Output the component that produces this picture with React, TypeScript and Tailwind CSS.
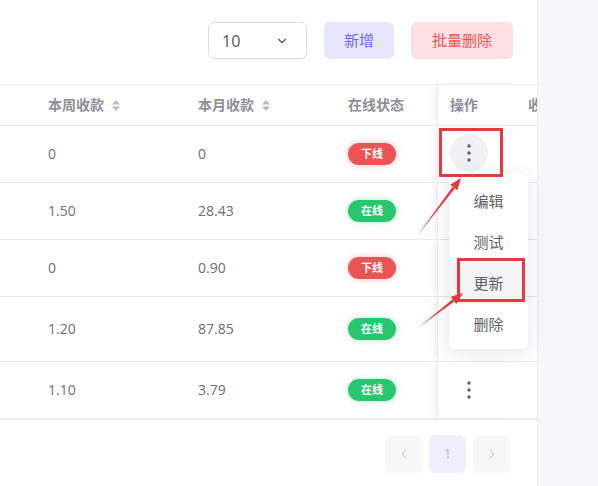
import { ChevronDown, ChevronLeft, ChevronRight } from 'lucide-react'

type Row = {
  week: string
  month: string
  online: boolean
  h: string
}

const rows: Row[] = [
  { week: '0', month: '0', online: false, h: 'h-[57px]' },
  { week: '1.50', month: '28.43', online: true, h: 'h-[57px]' },
  { week: '0', month: '0.90', online: false, h: 'h-[57px]' },
  { week: '1.20', month: '87.85', online: true, h: 'h-[65px]' },
  { week: '1.10', month: '3.79', online: true, h: 'h-[58px]' },
]

const font = { fontFamily: '"Open Sans", "Noto Sans CJK SC", sans-serif' }

function SortIcon() {
  return (
    <svg width="8" height="11" viewBox="0 0 8 11" className="ml-2">
      <path d="M4 0 L8 4.4 H0 Z" fill="#b9b9c3" />
      <path d="M4 11 L8 6.6 H0 Z" fill="#b9b9c3" />
    </svg>
  )
}

function Dots() {
  return (
    <svg width="4" height="18" viewBox="0 0 4 18">
      <circle cx="2" cy="2" r="1.7" fill="#5f5f66" />
      <circle cx="2" cy="9" r="1.7" fill="#5f5f66" />
      <circle cx="2" cy="16" r="1.7" fill="#5f5f66" />
    </svg>
  )
}

function Arrow({ x1, y1, x2, y2 }: { x1: number; y1: number; x2: number; y2: number }) {
  const dx = x2 - x1
  const dy = y2 - y1
  const len = Math.hypot(dx, dy)
  const ux = dx / len
  const uy = dy / len
  const bx = x2 - ux * 12
  const by = y2 - uy * 12
  const px = -uy
  const py = ux
  const head = `${x2},${y2} ${bx + px * 4.5},${by + py * 4.5} ${bx - px * 4.5},${by - py * 4.5}`
  const shaft = `${x1},${y1} ${bx + px * 1.4},${by + py * 1.4} ${bx - px * 1.4},${by - py * 1.4}`
  return (
    <g fill="#e8383d">
      <polygon points={shaft} />
      <polygon points={head} />
    </g>
  )
}

function Badge({ online }: { online: boolean }) {
  return online ? (
    <span className="flex h-[22px] w-[48px] items-center justify-center rounded-full bg-[#28c76f] text-[11px] font-bold text-white shadow-[0_0_6px_rgba(40,199,111,0.35)]">
      在线
    </span>
  ) : (
    <span className="flex h-[22px] w-[48px] items-center justify-center rounded-full bg-[#ea5455] text-[11px] font-bold text-white shadow-[0_0_6px_rgba(234,84,85,0.4)]">
      下线
    </span>
  )
}

export default function App() {
  return (
    <div className="relative flex h-[486px] w-[598px] overflow-hidden bg-[#f7f7fa]" style={font}>
      <div className="flex h-full w-[538px] shrink-0 flex-col overflow-hidden border-r border-[#ececf1] bg-white">
        {/* toolbar */}
        <div className="flex h-[84px] shrink-0 items-start justify-end gap-[17px] pr-[24px] pt-[22px]">
          <div className="flex h-[37px] w-[99px] items-center justify-between rounded-md border border-[#dcdce2] pl-[13px] pr-[17px] text-base text-[#555]">
            <span>10</span>
            <ChevronDown size={14} strokeWidth={2} className="text-[#555]" />
          </div>
          <button className="flex h-[37px] w-[70px] items-center justify-center rounded-md bg-[#e8e6fd] text-[15px] text-[#7367f0]">
            新增
          </button>
          <button className="flex h-[37px] w-[102px] items-center justify-center rounded-md bg-[#fde1e2] text-[15px] text-[#ea5455]">
            批量删除
          </button>
        </div>

        {/* table */}
        <div className="flex w-[600px] flex-col text-sm">
          <div className="flex h-[42px] items-center border-y border-[#ebe9f1] font-semibold text-[#8e8e96]">
            <div className="w-[36px] shrink-0" />
            <div className="flex w-[150px] shrink-0 items-center px-3">
              本周收款
              <SortIcon />
            </div>
            <div className="flex w-[150px] shrink-0 items-center px-3">
              本月收款
              <SortIcon />
            </div>
            <div className="w-[101px] shrink-0 px-3">在线状态</div>
            <div className="flex h-full w-[79px] shrink-0 items-center border-l border-[#ebe9f1] px-3 shadow-[-5px_0_6px_-3px_rgba(0,0,0,0.07)]">
              操作
            </div>
            <div className="shrink-0 px-3">收款</div>
          </div>

          {rows.map((r, i) => (
            <div
              key={i}
              className={`flex ${r.h} items-center ${i === rows.length - 1 ? 'border-b-2' : 'border-b'} border-[#ebe9f1] text-[#6e6b7b]`}
            >
              <div className="w-[36px] shrink-0" />
              <div className="w-[150px] shrink-0 px-3">{r.week}</div>
              <div className="w-[150px] shrink-0 px-3">{r.month}</div>
              <div className="w-[101px] shrink-0 px-3">
                <Badge online={r.online} />
              </div>
              <div className="flex h-full w-[79px] shrink-0 items-center border-l border-[#ebe9f1] pl-3 shadow-[-5px_0_6px_-3px_rgba(0,0,0,0.07)]">
                {i === 0 ? (
                  <span className="-mt-[3px] flex h-[38px] w-[38px] items-center justify-center rounded-full bg-[#f1f1f3]">
                    <Dots />
                  </span>
                ) : i === rows.length - 1 ? (
                  <span className="flex w-[38px] justify-center">
                    <Dots />
                  </span>
                ) : null}
              </div>
              <div className="shrink-0 px-3" />
            </div>
          ))}
        </div>

        {/* pagination */}
        <div className="flex justify-end gap-[7px] pr-[27px] pt-[15px]">
          <span className="flex h-[38px] w-[37px] items-center justify-center rounded-md bg-[#f8f8f8] text-[#b4b4b4]">
            <ChevronLeft size={16} strokeWidth={1.5} />
          </span>
          <span className="flex h-[38px] w-[37px] items-center justify-center rounded-md bg-[#f1effe] text-sm text-[#b9b3f5]">
            1
          </span>
          <span className="flex h-[38px] w-[37px] items-center justify-center rounded-md bg-[#f8f8f8] text-[#b4b4b4]">
            <ChevronRight size={16} strokeWidth={1.5} />
          </span>
        </div>
      </div>

      {/* dropdown menu */}
      <div className="absolute left-[449px] top-[173px] flex w-[79px] flex-col rounded-md bg-white pb-1 pt-2 text-[15px] text-[#5e5e66] shadow-[0_4px_18px_rgba(0,0,0,0.1)]">
        <div className="flex h-[41px] items-center justify-center">编辑</div>
        <div className="flex h-[41px] items-center justify-center">测试</div>
        <div className="flex h-[41px] items-center justify-center bg-[#f3f3f5]">更新</div>
        <div className="flex h-[41px] items-center justify-center">删除</div>
      </div>

      {/* annotations */}
      <div className="absolute left-[439px] top-[128px] h-[49px] w-[64px] border-[3px] border-[#e8383d]" />
      <div className="absolute left-[457px] top-[258px] h-[44px] w-[68px] border-[3px] border-[#e8383d]" />
      <svg className="pointer-events-none absolute left-0 top-0" width="598" height="486">
        <Arrow x1={417} y1={236} x2={461} y2={178} />
        <Arrow x1={419} y1={327} x2={463} y2={293} />
      </svg>
    </div>
  )
}
